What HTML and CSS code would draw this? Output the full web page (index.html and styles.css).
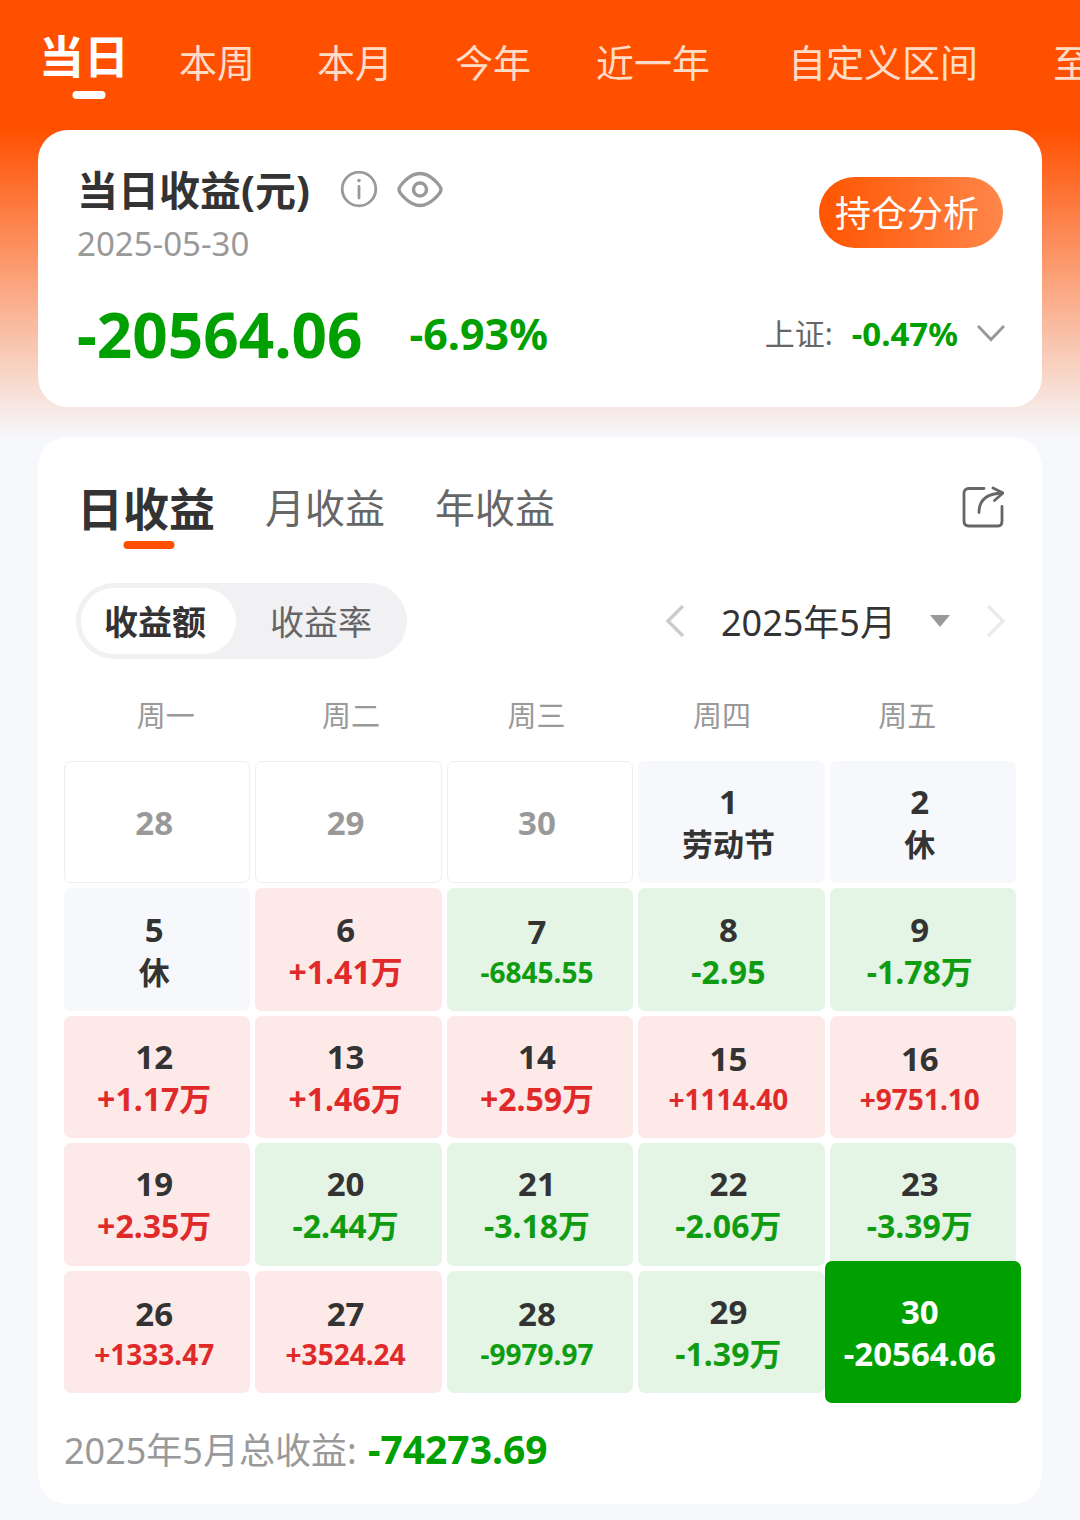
FILE: index.html
```
<!DOCTYPE html>
<html lang="zh-CN">
<head>
    <meta charset="UTF-8">
    <meta name="viewport" content="width=device-width, initial-scale=1.0">
    <title>当日收益</title>
    <link rel="stylesheet" href="styles.css">
</head>
<body>
    <nav class="range-tabs">
        <button class="range-tab active">当日</button>
        <button class="range-tab">本周</button>
        <button class="range-tab">本月</button>
        <button class="range-tab">今年</button>
        <button class="range-tab medium">近一年</button>
        <button class="range-tab wide">自定义区间</button>
        <button class="range-tab">至今</button>
    </nav>

    <section class="card summary">
        <div class="summary-top">
            <div>
                <div class="summary-title">
                    <h1>当日收益(元)</h1>
                    <button class="icon-button" aria-label="说明">
                        <svg width="38" height="38" viewBox="0 0 38 38" fill="none" stroke="#999" stroke-width="2.800">
                            <circle cx="19" cy="18" r="16.800"/>
                            <path d="M19 15.500v11.500" stroke-linecap="round"/>
                            <circle cx="19" cy="9.500" r="1.800" fill="#999" stroke="none"/>
                        </svg>
                    </button>
                    <button class="icon-button" aria-label="隐藏金额">
                        <svg width="46" height="38" viewBox="0 0 46 38" fill="none" stroke="#999" stroke-width="3.400">
                            <path d="M2 18.500C2 15.500 12 2.500 23 2.500s21 13 21 16-10 16-21 16S2 21.500 2 18.500z" stroke-linejoin="round"/>
                            <circle cx="23" cy="18.500" r="6.500"/>
                        </svg>
                    </button>
                </div>
                <div class="summary-date">2025-05-30</div>
            </div>
            <button class="analysis-button">持仓分析</button>
        </div>
        <div class="summary-bottom">
            <span class="amount">-20564.06</span>
            <span class="percent">-6.93%</span>
            <button class="index-button">
                <span>上证:</span>
                <b>-0.47%</b>
                <svg width="28" height="18" viewBox="0 0 28 18" fill="none" stroke="#999" stroke-width="3">
                    <path d="M1 1l13 13.500L27 1"/>
                </svg>
            </button>
        </div>
    </section>

    <section class="card detail">
        <div class="detail-head">
            <button class="period-tab active">日收益</button>
            <button class="period-tab">月收益</button>
            <button class="period-tab">年收益</button>
            <button class="icon-button share" aria-label="分享">
                <svg width="42" height="42" viewBox="0 0 42 42" fill="none" stroke="#666" stroke-width="2.800" stroke-linecap="round" stroke-linejoin="round">
                    <path d="M22 2.500H7q-5 0-5 5V35q0 5 5 5h29q4 0 4-5V20.500"/>
                    <path d="M17 26.500C17 14 25 7.500 40 7"/>
                    <path d="M31 2l10 5-8.500 7.500"/>
                </svg>
            </button>
        </div>

        <div class="detail-filter">
            <div class="switch">
                <button class="switch-item active">收益额</button>
                <button class="switch-item">收益率</button>
            </div>
            <div class="month-picker">
                <button class="icon-button" aria-label="上个月">
                    <svg width="20" height="34" viewBox="0 0 20 34" fill="none" stroke="#ccc" stroke-width="3.500">
                        <path d="M18 2L3 17l15 15"/>
                    </svg>
                </button>
                <label class="month">
                    <select aria-label="月份">
                        <option>2025年5月</option>
                    </select>
                    <svg width="20" height="12" viewBox="0 0 20 12">
                        <path d="M0 0h20L10 12z" fill="#999"/>
                    </svg>
                </label>
                <button class="icon-button" aria-label="下个月" disabled>
                    <svg width="20" height="34" viewBox="0 0 20 34" fill="none" stroke="#ebebeb" stroke-width="3.500">
                        <path d="M2 2l15 15L2 32"/>
                    </svg>
                </button>
            </div>
        </div>

        <div class="weekdays">
            <span>周一</span>
            <span>周二</span>
            <span>周三</span>
            <span>周四</span>
            <span>周五</span>
        </div>

        <div class="calendar">
            <button class="day other">28</button>
            <button class="day other">29</button>
            <button class="day other">30</button>
            <button class="day">1<span class="note">劳动节</span></button>
            <button class="day">2<span class="note">休</span></button>

            <button class="day">5<span class="note">休</span></button>
            <button class="day up">6<span class="value">+1.41万</span></button>
            <button class="day down">7<span class="value small">-6845.55</span></button>
            <button class="day down">8<span class="value">-2.95</span></button>
            <button class="day down">9<span class="value">-1.78万</span></button>

            <button class="day up">12<span class="value">+1.17万</span></button>
            <button class="day up">13<span class="value">+1.46万</span></button>
            <button class="day up">14<span class="value">+2.59万</span></button>
            <button class="day up">15<span class="value small">+1114.40</span></button>
            <button class="day up">16<span class="value small">+9751.10</span></button>

            <button class="day up">19<span class="value">+2.35万</span></button>
            <button class="day down">20<span class="value">-2.44万</span></button>
            <button class="day down">21<span class="value">-3.18万</span></button>
            <button class="day down">22<span class="value">-2.06万</span></button>
            <button class="day down">23<span class="value">-3.39万</span></button>

            <button class="day up">26<span class="value small">+1333.47</span></button>
            <button class="day up">27<span class="value small">+3524.24</span></button>
            <button class="day down">28<span class="value small">-9979.97</span></button>
            <button class="day down">29<span class="value">-1.39万</span></button>
            <button class="day selected">30<span class="value">-20564.06</span></button>
        </div>

        <p class="total">2025年5月总收益: <b>-74273.69</b></p>
    </section>
</body>
</html>
```
FILE: styles.css
```
* {
    box-sizing: border-box;
}
body {
    margin: 0;
    padding-bottom: 16px;
    background: #f6f8fb linear-gradient(#ff5000 130px, #f6f8fb 437px) no-repeat;
    color: #333;
    font-family: "Noto Sans", "Noto Sans CJK SC", sans-serif;
}
button, select {
    margin: 0;
    padding: 0;
    border: none;
    background: none;
    color: inherit;
    font: inherit;
    white-space: nowrap;
    cursor: pointer;
}
svg {
    display: block;
}
.icon-button {
    flex: none;
}

/* top range tabs */
.range-tabs {
    display: flex;
    padding: 0 0 30px 39px;
    overflow: hidden;
}
.range-tab {
    flex: none;
    height: 100px;
    padding: 30px 31px 6px;
    font-size: 38px;
    line-height: 64px;
    color: #ffdcc8;
}
.range-tab.medium {
    padding-left: 34px;
    padding-right: 34px;
}
.range-tab.wide {
    padding-left: 44px;
    padding-right: 44px;
}
.range-tab.active {
    position: relative;
    margin-right: 10px;
    padding: 25px 9px 11px 0;
    font-size: 45px;
    font-weight: bold;
    color: #fff;
}
.range-tab.active::after,
.period-tab.active::after {
    content: "";
    position: absolute;
    left: 50%;
    bottom: 1px;
    width: 33px;
    height: 8px;
    border-radius: 4px;
    background-color: #fff;
    transform: translateX(-50%);
}

.card {
    margin: 0 38px;
    border-radius: 30px;
    background-color: #fff;
}

/* summary card */
.summary {
    padding: 32px 39px 33px;
}
.summary-top {
    display: flex;
    justify-content: space-between;
    align-items: flex-start;
}
.summary-title {
    display: flex;
    align-items: center;
    gap: 19px;
}
.summary-title h1 {
    margin: 0 11px 0 0;
    font-size: 41px;
    line-height: 56px;
}
.summary-date {
    margin-top: 4px;
    font-size: 33px;
    line-height: 44px;
    color: #999;
}
.analysis-button {
    height: 71px;
    margin-top: 15px;
    padding: 3px 24px 0 16px;
    border-radius: 36px;
    background: linear-gradient(to right, #ff5500, #ff864a);
    color: #fff;
    font-size: 36px;
    line-height: 68px;
}
.summary-bottom {
    display: flex;
    align-items: center;
    margin-top: 28px;
    line-height: 80px;
    color: #00a000;
    font-weight: bold;
}
.amount {
    font-size: 62px;
}
.percent {
    margin-left: 47px;
    font-size: 43px;
}
.index-button {
    display: flex;
    align-items: center;
    gap: 19px;
    margin-left: auto;
    margin-right: -2px;
    font-size: 30px;
    font-weight: normal;
    line-height: 60px;
    color: #666;
}
.index-button b {
    font-size: 33px;
    color: #00a000;
}

/* detail card */
.detail {
    margin-top: 30px;
    padding: 39px 26px 23px;
}
.detail-head {
    display: flex;
    gap: 50px;
    padding: 0 12px 0 13px;
}
.period-tab {
    height: 73px;
    padding-bottom: 9px;
    font-size: 40px;
    line-height: 64px;
    color: #666;
}
.period-tab.active {
    position: relative;
    margin-right: -6px;
    padding-right: 6px;
    font-size: 46px;
    font-weight: bold;
    color: #333;
}
.period-tab.active::after {
    bottom: 0;
    width: 51px;
    background-color: #ff5000;
}
.share {
    align-self: flex-start;
    margin: 10px 0 0 auto;
}
.detail-filter {
    display: flex;
    justify-content: space-between;
    align-items: center;
    margin-top: 34px;
    padding: 0 10px 0 12px;
}
.switch {
    display: flex;
    padding: 5px;
    border-radius: 38px;
    background-color: #f1f1f4;
}
.switch-item {
    height: 66px;
    padding: 2px 30px 0 34px;
    border-radius: 33px;
    font-size: 34px;
    line-height: 64px;
    color: #666;
}
.switch-item.active {
    padding: 2px 30px 0 23px;
    background-color: #fff;
    font-weight: bold;
    color: #333;
}
.month-picker {
    display: flex;
    align-items: center;
    gap: 36px;
}
.month {
    display: flex;
    align-items: center;
    gap: 34px;
}
.month select {
    appearance: none;
    padding-top: 4px;
    font-size: 36px;
    line-height: 52px;
}

/* calendar */
.weekdays {
    display: grid;
    grid-template-columns: repeat(5, 1fr);
    margin: 37px 0 25px;
    padding: 0 16px 0 9px;
    font-size: 29px;
    line-height: 40px;
    text-align: center;
    color: #999;
}
.calendar {
    display: grid;
    grid-template-columns: repeat(5, 1fr);
    grid-auto-rows: 1fr;
    gap: 5px;
    min-height: 632px;
}
.day {
    display: flex;
    flex-direction: column;
    justify-content: center;
    align-items: center;
    padding: 2px 6px 0 0;
    border-radius: 7px;
    background-color: #f6f8fb;
    font-size: 33px;
    font-weight: bold;
    line-height: 42px;
}
.day.other {
    border: 1px solid #eee;
    background-color: #fff;
    color: #999;
}
.day.up {
    background-color: #fde9e8;
}
.day.down {
    background-color: #e4f4e5;
}
.up .value {
    color: #e02a2a;
}
.down .value {
    color: #109c10;
}
.value {
    font-size: 32px;
}
.value.small {
    font-size: 28px;
    line-height: 38px;
}
.note {
    font-size: 31px;
}
.day.selected {
    z-index: 1;
    margin: -10px -5px;
    background-color: #00a000;
    color: #fff;
}
.selected .value {
    font-size: 33px;
}

.total {
    margin: 26px 0 0;
    font-size: 36px;
    line-height: 60px;
    color: #999;
}
.total b {
    margin-left: 2px;
    font-size: 39px;
    color: #00a000;
}
```
